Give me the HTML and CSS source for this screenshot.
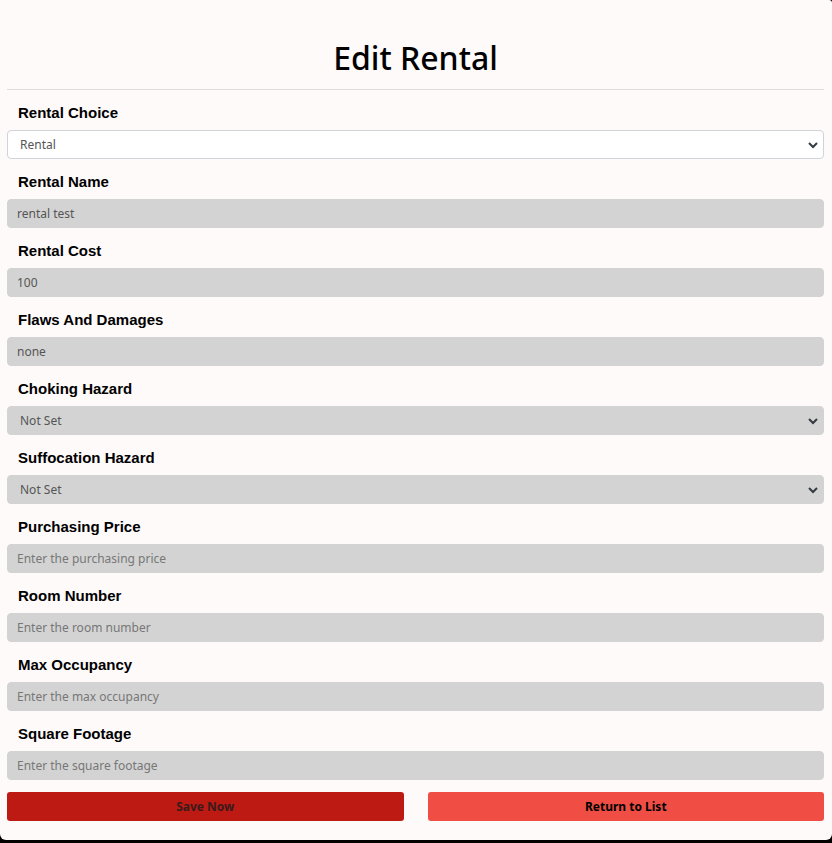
FILE: index.html
```html
<!DOCTYPE html>
<html>
<head>
<meta charset="utf-8">
<link rel="stylesheet" href="styles.css">
</head>
<body>
<div class="card">
  <h1 class="title">Edit Rental</h1>
  <hr class="divider">
  <form class="form">
    <div class="field">
      <label class="label">Rental Choice</label>
      <select class="control select select-white"><option>Rental</option></select>
    </div>
    <div class="field">
      <label class="label">Rental Name</label>
      <input class="control input" value="rental test">
    </div>
    <div class="field">
      <label class="label">Rental Cost</label>
      <input class="control input" value="100">
    </div>
    <div class="field">
      <label class="label">Flaws And Damages</label>
      <input class="control input" value="none">
    </div>
    <div class="field">
      <label class="label">Choking Hazard</label>
      <select class="control select"><option>Not Set</option></select>
    </div>
    <div class="field">
      <label class="label">Suffocation Hazard</label>
      <select class="control select"><option>Not Set</option></select>
    </div>
    <div class="field">
      <label class="label">Purchasing Price</label>
      <input class="control input" placeholder="Enter the purchasing price">
    </div>
    <div class="field">
      <label class="label">Room Number</label>
      <input class="control input" placeholder="Enter the room number">
    </div>
    <div class="field">
      <label class="label">Max Occupancy</label>
      <input class="control input" placeholder="Enter the max occupancy">
    </div>
    <div class="field">
      <label class="label">Square Footage</label>
      <input class="control input" placeholder="Enter the square footage">
    </div>
    <div class="actions">
      <button type="button" class="btn btn-save">Save Now</button>
      <button type="button" class="btn btn-return">Return to List</button>
    </div>
  </form>
</div>
</body>
</html>
```
FILE: styles.css
```css
html, body {
  margin: 0;
  padding: 0;
  background: #000;
}
.card {
  background: #fffafa;
  width: 832px;
  height: 840px;
  box-sizing: border-box;
  border-radius: 0 3px 6px 6px;
  padding: 0 8px 0 7px;
}
.title {
  margin: 0;
  padding-top: 36px;
  font-family: "Noto Sans", sans-serif;
  font-weight: 500;
  font-size: 32px;
  line-height: 44px;
  text-align: center;
  color: #000;
}
.divider {
  margin: 9px 0 0;
  border: 0;
  border-top: 1px solid #dedede;
  height: 0;
}
.form {
  display: flex;
  flex-direction: column;
}
.field {
  display: flex;
  flex-direction: column;
  padding-top: 14px;
}
.label {
  font-family: "Liberation Sans", Arial, sans-serif;
  font-weight: 700;
  font-size: 15px;
  line-height: 17px;
  color: #000;
  padding-left: 11px;
  margin-bottom: 9px;
}
.control {
  height: 29px;
  box-sizing: border-box;
  margin: 0;
  border-radius: 4px;
  font-family: "Noto Sans", sans-serif;
  font-size: 12px;
  color: #555;
  width: 100%;
}
.input {
  background: #d3d3d3;
  border: 1px solid #d3d3d3;
  padding: 0 9px;
}
.input::placeholder {
  color: #777;
}
.select {
  -webkit-appearance: none;
  appearance: none;
  background-color: #d3d3d3;
  border: 1px solid #d3d3d3;
  padding: 0 12px;
  background-image: url("data:image/svg+xml,%3Csvg xmlns='http://www.w3.org/2000/svg' width='12' height='8' viewBox='0 0 12 8'%3E%3Cpath d='M2 2l4 4 4-4' fill='none' stroke='%23343a40' stroke-width='2'/%3E%3C/svg%3E");
  background-repeat: no-repeat;
  background-position: right 4px center;
}
.select-white {
  background-color: #fff;
  border-color: #ced4da;
}
.actions {
  display: flex;
  gap: 24px;
  padding-top: 12px;
}
.btn {
  flex: 1;
  height: 29px;
  border: 0;
  border-radius: 3px;
  font-family: "Noto Sans", sans-serif;
  font-weight: 700;
  font-size: 12px;
  cursor: pointer;
}
.btn-save {
  background: #bd1a14;
  color: #3a1a1a;
}
.btn-return {
  background: #f04e45;
  color: #000;
}
```
